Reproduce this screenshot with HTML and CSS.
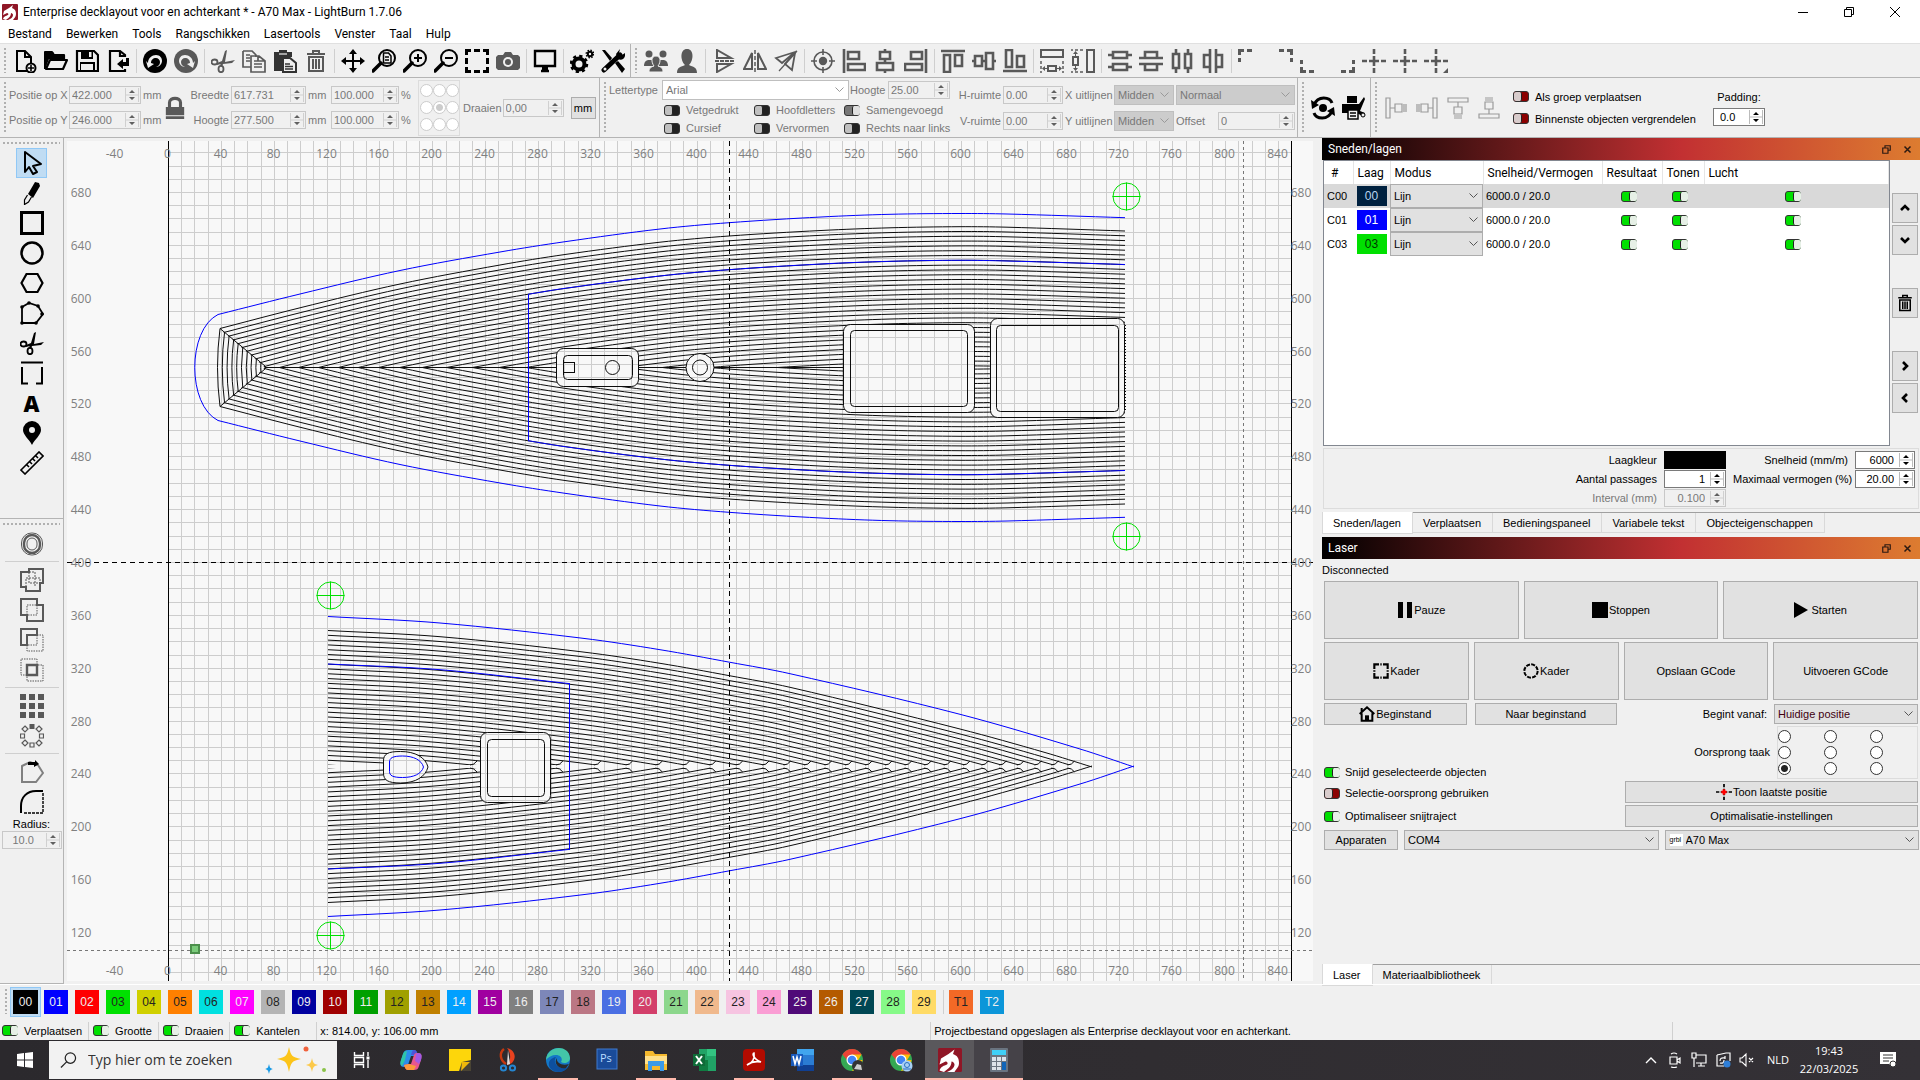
FILE: index.html
```
<!DOCTYPE html>
<html lang="nl">
<head>
    <meta charset="UTF-8">
    <title>LightBurn 1.7.06</title>
    <link rel="stylesheet" href="styles.css">
</head>
<body>
    <!-- icon sprite -->
    <svg class="sprite" aria-hidden="true">
        <symbol id="i-logo" viewBox="0 0 16 16"><rect width="16" height="16" rx="1" fill="#8f1626"/><path d="M1 15c1-3 3-3 5-4 1-1 0-2-1-2L1 11l1-4 5-3 4-3-1 3c3 1 4 3 4 6s-2 4-3 6H6c3-1 5-3 5-5 0-1-1-2-2-2 0 4-3 5-5 7z" fill="#fff"/></symbol>
        <symbol id="i-new" viewBox="0 0 24 24"><path d="M14 22H4V2h8l6 6v6M12 2v6h5" fill="none" stroke="currentColor" stroke-width="2"/><circle cx="18" cy="19" r="4.5" fill="none" stroke="currentColor" stroke-width="2"/><path d="M18 16v6M15 19h6" stroke="currentColor" stroke-width="1.6"/></symbol>
        <symbol id="i-open" viewBox="0 0 24 24"><path d="M1 20V3h7l2 3h10v4M2 20l4-9h17l-4 9z" fill="none" stroke="currentColor" stroke-width="2.2" stroke-linejoin="round"/><path d="M1 3h8l2 4h9v3H5L2 18z"/></symbol>
        <symbol id="i-save" viewBox="0 0 24 24"><path d="M2 2h17l4 4v16H2z" fill="none" stroke="currentColor" stroke-width="2.2"/><path d="M6 1h12v9H6zM5 13h15v9H5z"/><path d="M14 3h2.500v5H14zM6 15h12v6H6z" fill="#f0f0f0"/></symbol>
        <symbol id="i-export" viewBox="0 0 24 24"><path d="M19 8V6l-5-4H4v20h15v-2M14 2v5h5" fill="none" stroke="currentColor" stroke-width="2.200"/><path d="M11 15l6-5v3h3V9h3v8h-6v3z"/></symbol>
        <symbol id="i-undo" viewBox="0 0 24 24"><circle cx="12" cy="12" r="12"/><path d="M5 14c0-5 4-8 8-8s6 3 6 6-3 6-6 6c3-1 4-3 4-5s-2-4-4-4c-3 0-5 2-5 5l3 1-6 4-2-7z" fill="#f0f0f0"/></symbol>
        <symbol id="i-cut" viewBox="0 0 24 24"><g fill="none" stroke="currentColor" stroke-width="1.800"><ellipse cx="3.500" cy="13" rx="3" ry="2.500"/><ellipse cx="10" cy="20" rx="2.500" ry="3.200"/></g><path d="M6 14l5-2 3-10 2-1-2 12 10-2-3 3-9 1-1 3-2-2 1-1-4 1z"/></symbol>
        <symbol id="i-copy" viewBox="0 0 24 24"><path d="M1 2h9l4 4v2M1 2v16h8M9 7h8l6 5v11H9zM4 6h4M4 9h4M4 12h4M12 12h4M12 15h8M12 18h8M16 7v5h6" fill="none" stroke="currentColor" stroke-width="1.700"/></symbol>
        <symbol id="i-paste" viewBox="0 0 24 24"><path d="M1 3h5V1h8v2h5v5H9v14H1z"/><path d="M10 9h7l6 5v9H10z" fill="#f0f0f0" stroke="currentColor" stroke-width="2"/><path d="M12 15h5M12 17.500h8M12 20h8M6 5h8" stroke="currentColor" stroke-width="1.300"/><path d="M6 5h8" stroke="#f0f0f0" stroke-width="1.200"/></symbol>
        <symbol id="i-trash" viewBox="0 0 24 24"><path d="M3 5h18M4 8h16M9 5V2h6v3M5 8v14h14V8M9 10v10M12 10v10M15 10v10" fill="none" stroke="currentColor" stroke-width="2"/></symbol>
        <symbol id="i-move" viewBox="0 0 24 24"><path d="M12 0l4 5h-3v6h6V8l5 4-5 4v-3h-6v6h3l-4 5-4-5h3v-6H5v3l-5-4 5-4v3h6V5H8z"/></symbol>
        <symbol id="i-lens" viewBox="0 0 24 24"><circle cx="15" cy="9" r="8" fill="none" stroke="currentColor" stroke-width="2"/><path d="M9 14l-8 8" stroke="currentColor" stroke-width="3.500" stroke-linecap="round"/></symbol>
        <symbol id="i-zoompage" viewBox="0 0 24 24"><use href="#i-lens"/><path d="M11.500 4h5l2.500 3v7h-7.500zM13 8h4M13 11h4" fill="none" stroke="currentColor" stroke-width="1.500"/></symbol>
        <symbol id="i-zoomin" viewBox="0 0 24 24"><use href="#i-lens"/><path d="M15 5v8M11 9h8" stroke="currentColor" stroke-width="2"/></symbol>
        <symbol id="i-zoomout" viewBox="0 0 24 24"><use href="#i-lens"/><path d="M11 9h8" stroke="currentColor" stroke-width="2"/></symbol>
        <symbol id="i-frame" viewBox="0 0 24 24"><path d="M1.500 6V1.500H6M9 1.500h6M18 1.500h4.500V6M22.500 9v6M22.500 18v4.500H18M15 22.500H9M6 22.500H1.500V18M1.500 15V9" fill="none" stroke="currentColor" stroke-width="3"/></symbol>
        <symbol id="i-camera" viewBox="0 0 24 24"><path d="M2 6h5l2-3h6l2 3h5l2 2v11l-2 2H2l-2-2V8z"/><circle cx="12" cy="13" r="5" fill="#f0f0f0"/><circle cx="12" cy="13" r="3"/></symbol>
        <symbol id="i-monitor" viewBox="0 0 24 24"><path d="M2 2h20v15H2zM8 22h8" fill="none" stroke="currentColor" stroke-width="2.400"/><path d="M9 17h6v5H9z"/></symbol>
        <symbol id="i-gears" viewBox="0 0 24 24"><circle cx="9" cy="15" r="5.500" fill="none" stroke="currentColor" stroke-width="4"/><circle cx="9" cy="15" r="8" fill="none" stroke="currentColor" stroke-width="2.500" stroke-dasharray="3.200 3.080"/><circle cx="20" cy="5" r="2.200" fill="none" stroke="currentColor" stroke-width="2"/><circle cx="20" cy="5" r="3.800" fill="none" stroke="currentColor" stroke-width="1.400" stroke-dasharray="1.500 1.480"/></symbol>
        <symbol id="i-tools" viewBox="0 0 24 24"><path d="M3 21L19 6" stroke="currentColor" stroke-width="5" stroke-linecap="round"/><path d="M15 5l4-5-1 4 3 2 3-2c1 5-3 8-7 6zM1 1l3 0 7 8-2 3zM14 14l3-2 7 8-3 4z"/><circle cx="4" cy="20" r="1.500" fill="#f0f0f0"/></symbol>
        <symbol id="i-group" viewBox="0 0 24 24"><circle cx="5" cy="5" r="3.500"/><circle cx="19" cy="5" r="3.500"/><path d="M0 17c0-4 2-6 5-6h14c3 0 5 2 5 6z"/><path d="M5 23c0-4 2-5 5-6-3-4-3-10 2-10s5 6 2 10c3 1 5 2 5 6z" stroke="#f0f0f0"/></symbol>
        <symbol id="i-person" viewBox="0 0 24 24"><path d="M2 24c0-6 4-6 8-8-5-5-5-16 2-16s7 11 2 16c4 2 8 2 8 8z"/></symbol>
        <symbol id="i-flipv" viewBox="0 0 24 24"><path d="M5 1v8h14zM5 15h14L5 23z" fill="none" stroke="currentColor" stroke-width="2"/><path d="M3 12h20" stroke="currentColor" stroke-width="2" stroke-dasharray="4 1"/></symbol>
        <symbol id="i-fliph" viewBox="0 0 24 24"><path d="M9 4v16H1zM15 4v16h8z" fill="none" stroke="currentColor" stroke-width="2"/><path d="M12 1v22" stroke="currentColor" stroke-width="1.500" stroke-dasharray="4 2"/></symbol>
        <symbol id="i-flipd" viewBox="0 0 24 24"><path d="M2 9l19-6L8 14zM21 4l-3 17-7-6z" fill="none" stroke="currentColor" stroke-width="1.800"/><path d="M5 22L23 2" stroke="currentColor" stroke-width="1.200"/></symbol>
        <symbol id="i-target" viewBox="0 0 24 24"><circle cx="12" cy="12" r="9" fill="none" stroke="currentColor" stroke-width="1.600"/><circle cx="12" cy="12" r="4.200"/><path d="M12 0v6M12 18v6M0 12h6M18 12h6" stroke="currentColor" stroke-width="1.600"/></symbol>
        <symbol id="i-alignl" viewBox="0 0 24 24"><path d="M2 0v24M6 3h11v7H6zM6 15h17v6H6z" fill="none" stroke="currentColor" stroke-width="2.600"/></symbol>
        <symbol id="i-alignc" viewBox="0 0 24 24"><path d="M12 0v3M12 10v4M12 21v3M7 3h10v7H7zM4 14h16v7H4z" fill="none" stroke="currentColor" stroke-width="2.600"/></symbol>
        <symbol id="i-lock" viewBox="0 0 24 24"><path d="M6 12V6c0-6 12-6 12 0v6" fill="none" stroke="currentColor" stroke-width="3.400"/><path d="M2 11h20v9H2zM2 21h20v3H2z"/></symbol>
        <symbol id="i-distw" viewBox="0 0 24 24"><path d="M1 1h22v7H1zM8 17h8v5H8z" fill="none" stroke="currentColor" stroke-width="2"/><path d="M1 12v12M23 12v12" stroke="currentColor" stroke-width="1.500" stroke-dasharray="3 2"/><path d="M7 19.500H3M17 19.500h4" stroke="currentColor"/><path d="M5 17l-3 2.500L5 22zM19 17l3 2.500-3 2.500z"/></symbol>
        <symbol id="i-rotate" viewBox="0 0 24 24"><path d="M3 9c4-10 16-8 18-2M21 15c-4 10-16 8-18 2" fill="none" stroke="currentColor" stroke-width="3"/><path d="M0 4l1 9 7-4zM24 20l-1-9-7 4z"/><circle cx="12" cy="12" r="4"/></symbol>
        <symbol id="i-printcut" viewBox="0 0 24 24"><path d="M5 0h10v7H5zM0 8h17l5-7 1 2-5 12 5 2-1 4-7-4H0z"/><path d="M6 14h10v9H6zM8 17h6M8 20h6" fill="#f0f0f0" stroke="currentColor" stroke-width="1.500"/><circle cx="21" cy="19" r="2" fill="#f0f0f0" stroke="currentColor"/></symbol>
        <symbol id="i-corner" viewBox="0 0 24 24"><path d="M1.500 13V9M1.500 6V1.500H6M9 1.500h5" fill="none" stroke="currentColor" stroke-width="3"/></symbol>
        <symbol id="i-cross" viewBox="0 0 24 24"><path d="M12 0v5M12 7v10M12 19v5M0 12h5M7 12h10M19 12h5" stroke="currentColor" stroke-width="2.600"/></symbol>
        <symbol id="i-distv" viewBox="0 0 24 24"><path d="M5 3h14v6H5zM5 15h14v6H5zM0 6h5M19 6h5M0 18h5M19 18h5" fill="none" stroke="currentColor" stroke-width="2.600"/></symbol>
        <symbol id="i-distc" viewBox="0 0 24 24"><path d="M6 9V3h12v6M6 15v6h12v-6M0 9h24M0 15h24" fill="none" stroke="currentColor" stroke-width="2.600"/></symbol>
        <symbol id="i-dock" viewBox="0 0 24 24"><path d="M2 2h4v20H2zM11 8h7v8h-7zM6 12h5M20 8v8M22 8v8" fill="none" stroke="currentColor" stroke-width="1.200"/></symbol>
        <symbol id="i-select" viewBox="0 0 24 24"><path d="M5 1v20l4-5 4 7 4-2-4-6 8-2z" fill="none" stroke="currentColor" stroke-width="2" stroke-linejoin="round"/></symbol>
        <symbol id="i-pencil" viewBox="0 0 24 24"><path d="M8 13l7-12 4 1 1 3-7 12z"/><path d="M7.500 14l-3 5 0 4.500 4-2.500 3-5" fill="none" stroke="currentColor" stroke-width="1.200"/></symbol>
        <symbol id="i-rect" viewBox="0 0 24 24"><path d="M1.500 1.500h21v21h-21z" fill="none" stroke="currentColor" stroke-width="3"/></symbol>
        <symbol id="i-ellipse" viewBox="0 0 24 24"><circle cx="12" cy="12" r="10.500" fill="none" stroke="currentColor" stroke-width="2.500"/></symbol>
        <symbol id="i-hex" viewBox="0 0 24 24"><path d="M6.500 3h11l5 9-5 9h-11l-5-9z" fill="none" stroke="currentColor" stroke-width="2.200"/></symbol>
        <symbol id="i-poly" viewBox="0 0 24 24"><path d="M2 6l7-4 9 3 5 8-7 9H2z" fill="none" stroke="currentColor" stroke-width="1.800"/><circle cx="2" cy="6" r="1.800"/><circle cx="9" cy="2" r="1.800"/><circle cx="18" cy="5" r="1.800"/><circle cx="22" cy="13" r="1.800"/><circle cx="16" cy="22" r="1.800"/><circle cx="2" cy="22" r="1.800"/></symbol>
        <symbol id="i-bracket" viewBox="0 0 24 24"><path d="M1 1.500h22M8 22.500H2V6M16 22.500h6V6" fill="none" stroke="currentColor" stroke-width="2"/></symbol>
        <symbol id="i-pin" viewBox="0 0 24 24"><path d="M12 24C9 18 3 14 3 9a9 9 0 0 1 18 0c0 5-6 9-9 15z"/><circle cx="12" cy="9" r="3" fill="#f0f0f0"/></symbol>
        <symbol id="i-ruler" viewBox="0 0 24 24"><path d="M1 19L19 1l4 4L5 23zM7 14l2 2M10 11l2 2M13 8l2 2M16 5l2 2" fill="none" stroke="currentColor" stroke-width="1.600"/></symbol>
        <symbol id="i-offset" viewBox="0 0 24 24"><g fill="none" stroke="currentColor"><rect x="1.500" y="1" width="21" height="22" rx="10"/><rect x="4" y="3" width="16" height="18" rx="8" stroke-width="2.400"/><rect x="7" y="6" width="10" height="12" rx="5"/></g></symbol>
        <symbol id="i-weld" viewBox="0 0 24 24"><path d="M9 1h14v14h-3v8H6v-4H1V4h8z" fill="none" stroke="currentColor" stroke-width="2"/><path d="M9 4h6v15M6 19v-9h14v5H9V4" fill="none" stroke="currentColor" stroke-dasharray="2 1"/></symbol>
        <symbol id="i-union" viewBox="0 0 24 24"><path d="M1 1h16v6h6v16H7v-6H1z" fill="none" stroke="currentColor" stroke-width="2"/><path d="M7 7h10v10H7z" fill="none" stroke="currentColor" stroke-dasharray="1.500 1"/></symbol>
        <symbol id="i-subtract" viewBox="0 0 24 24"><path d="M1 1h16v6H7v10H1z" fill="none" stroke="currentColor" stroke-width="2"/><path d="M17 7h6v16H7v-6M17 7v10H7" fill="none" stroke="currentColor" stroke-dasharray="1.500 1"/></symbol>
        <symbol id="i-intersect" viewBox="0 0 24 24"><path d="M7 7h10v10H7z" fill="none" stroke="currentColor" stroke-width="2.400"/><path d="M7 17H1V1h16v6h6v16H7v-6" fill="none" stroke="currentColor" stroke-dasharray="1.500 1"/></symbol>
        <symbol id="i-grid" viewBox="0 0 24 24"><path d="M0 0h6v6H0zM9 0h6v6H9zM18 0h6v6h-6zM0 9h6v6H0zM9 9h6v6H9zM18 9h6v6h-6zM0 18h6v6H0zM9 18h6v6H9zM18 18h6v6h-6z"/></symbol>
        <symbol id="i-radial" viewBox="0 0 24 24"><path d="M9.500 0h5v5h-5z"/><path d="M10 19h4v4h-4zM.5 10h4v4h-4zM19.500 10h4v4h-4zM5 2l3 3-3 3-3-3zM19 2l3 3-3 3-3-3zM5 16l3 3-3 3-3-3zM19 16l3 3-3 3-3-3z" fill="none" stroke="currentColor" stroke-width="1.200"/></symbol>
        <symbol id="i-startpt" viewBox="0 0 24 24"><path d="M2 6l8-4 8 3 5 8-7 9H2z" fill="none" stroke="#808080" stroke-width="2"/><path d="M8 2h7V0l4 4-5 3V5H8z" fill="#000"/></symbol>
        <symbol id="i-fillet" viewBox="0 0 24 24"><path d="M1 23v-7C1 7 7 1 16 1h7" fill="none" stroke="currentColor" stroke-width="2"/><path d="M23 3v20H3" fill="none" stroke="currentColor" stroke-width="1.400" stroke-dasharray="3 1"/></symbol>
        <symbol id="i-up" viewBox="0 0 12 12"><path d="M2 8l4-4 4 4" fill="none" stroke="currentColor" stroke-width="2.600"/></symbol>
        <symbol id="i-circle" viewBox="0 0 24 24"><circle cx="12" cy="12" r="10" fill="none" stroke="currentColor" stroke-width="3" stroke-dasharray="6 1.850"/></symbol>
        <symbol id="i-kader" viewBox="0 0 24 24"><path d="M2 9V2h7M15 2h7v7M22 15v7h-7M9 22H2v-7M11 2h2M11 22h2M2 11v2M22 11v2" fill="none" stroke="currentColor" stroke-width="3.200"/></symbol>
        <symbol id="i-home" viewBox="0 0 24 24"><path d="M1 12L12 2l11 10M4 11v11h16V11M4 9V3" fill="none" stroke="currentColor" stroke-width="3"/><path d="M9 22v-8h6v8z"/></symbol>
        <symbol id="i-float" viewBox="0 0 12 12"><path d="M4 4V1h7v6H8M1 4h7v7H1z" fill="none" stroke="currentColor" stroke-width="1.600"/></symbol>
        <symbol id="i-close" viewBox="0 0 12 12"><path d="M2 2l8 8M10 2l-8 8" stroke="currentColor" stroke-width="2"/></symbol>
        <symbol id="i-chrome" viewBox="0 0 24 24"><circle cx="12" cy="12" r="11" fill="#34a853"/><path d="M12 1v11h10.500A11 11 0 0 1 12 23l5-9 4.500-7.500z" fill="#fbbc04"/><path d="M2.500 6.500A11 11 0 0 1 21.500 6.500H12L7 12z" fill="#ea4335"/><circle cx="12" cy="12" r="5.500" fill="#fff"/><circle cx="12" cy="12" r="4.300" fill="#4285f4"/></symbol>
    </svg>

    <header class="titlebar">
        <svg class="ic16"><use href="#i-logo"/></svg>
        <span class="title">Enterprise decklayout voor en achterkant * - A70 Max - LightBurn 1.7.06</span>
        <div class="winbtns">
            <button aria-label="Minimaliseren"><svg viewBox="0 0 12 12"><path d="M1 6.500h10" stroke="#000"/></svg></button>
            <button aria-label="Herstellen"><svg viewBox="0 0 12 12"><path d="M3.500 3.500v-2h7v7h-2M1.500 3.500h7v7h-7z" fill="none" stroke="#000"/></svg></button>
            <button aria-label="Sluiten"><svg viewBox="0 0 12 12"><path d="M1 1l10 10M11 1L1 11" stroke="#000"/></svg></button>
        </div>
    </header>

    <nav class="menu">
        <a href="#">Bestand</a><a href="#">Bewerken</a><a href="#">Tools</a><a href="#">Rangschikken</a><a href="#">Lasertools</a><a href="#">Venster</a><a href="#">Taal</a><a href="#">Hulp</a>
    </nav>

    <div class="toolrow">
        <div class="toolbar main-tools">
            <span class="handle"></span>
            <button aria-label="Nieuw"><svg><use href="#i-new"/></svg></button>
            <button aria-label="Openen"><svg><use href="#i-open"/></svg></button>
            <button aria-label="Opslaan"><svg><use href="#i-save"/></svg></button>
            <button aria-label="Importeren"><svg><use href="#i-export"/></svg></button>
            <span class="sep"></span>
            <button aria-label="Ongedaan maken"><svg><use href="#i-undo"/></svg></button>
            <button aria-label="Opnieuw" class="dim mirror"><svg><use href="#i-undo"/></svg></button>
            <span class="sep"></span>
            <button aria-label="Knippen" class="dim"><svg><use href="#i-cut"/></svg></button>
            <button aria-label="Kopiëren" class="dim"><svg><use href="#i-copy"/></svg></button>
            <button aria-label="Plakken" class="dark"><svg><use href="#i-paste"/></svg></button>
            <button aria-label="Verwijderen" class="dim"><svg><use href="#i-trash"/></svg></button>
            <span class="sep"></span>
            <button aria-label="Pannen"><svg><use href="#i-move"/></svg></button>
            <button aria-label="Zoom naar pagina"><svg><use href="#i-zoompage"/></svg></button>
            <button aria-label="Inzoomen"><svg><use href="#i-zoomin"/></svg></button>
            <button aria-label="Uitzoomen"><svg><use href="#i-zoomout"/></svg></button>
            <button aria-label="Zoom naar selectie"><svg><use href="#i-frame"/></svg></button>
            <button aria-label="Camera" class="dim"><svg><use href="#i-camera"/></svg></button>
            <span class="sep"></span>
            <button aria-label="Voorbeeld"><svg><use href="#i-monitor"/></svg></button>
            <span class="sep"></span>
            <button aria-label="Instellingen"><svg><use href="#i-gears"/></svg></button>
            <button aria-label="Machine-instellingen"><svg><use href="#i-tools"/></svg></button>
        </div>
        <div class="toolbar dim">
            <span class="handle"></span>
            <button aria-label="Groeperen"><svg><use href="#i-group"/></svg></button>
            <button aria-label="Groep opheffen"><svg><use href="#i-person"/></svg></button>
            <span class="sep"></span>
            <button aria-label="Verticaal spiegelen"><svg><use href="#i-flipv"/></svg></button>
            <button aria-label="Horizontaal spiegelen"><svg><use href="#i-fliph"/></svg></button>
            <button aria-label="Spiegelen over lijn"><svg><use href="#i-flipd"/></svg></button>
            <span class="sep"></span>
            <button aria-label="Centreren"><svg><use href="#i-target"/></svg></button>
            <button aria-label="Links uitlijnen"><svg><use href="#i-alignl"/></svg></button>
            <button aria-label="Midden uitlijnen"><svg><use href="#i-alignc"/></svg></button>
            <button aria-label="Rechts uitlijnen" class="mirror"><svg><use href="#i-alignl"/></svg></button>
            <span class="sep"></span>
            <button aria-label="Boven uitlijnen" class="turn"><svg><use href="#i-alignl"/></svg></button>
            <button aria-label="Verticaal midden" class="turnback"><svg><use href="#i-alignc"/></svg></button>
            <button aria-label="Onder uitlijnen" class="turnflip"><svg><use href="#i-alignl"/></svg></button>
            <span class="sep"></span>
            <button aria-label="Gelijke breedte"><svg><use href="#i-distw"/></svg></button>
            <button aria-label="Gelijke hoogte" class="turn"><svg><use href="#i-distw"/></svg></button>
            <span class="sep"></span>
            <button aria-label="Verdelen verticaal"><svg><use href="#i-distv"/></svg></button>
            <button aria-label="Verdelen midden"><svg><use href="#i-distc"/></svg></button>
            <button aria-label="Verdelen horizontaal" class="turn"><svg><use href="#i-distv"/></svg></button>
            <button aria-label="Verdelen centrum" class="turn"><svg><use href="#i-distc"/></svg></button>
            <span class="sep"></span>
            <button aria-label="Linksboven"><svg><use href="#i-corner"/></svg></button>
            <button aria-label="Rechtsboven" class="mirror"><svg><use href="#i-corner"/></svg></button>
            <button aria-label="Linksonder" class="flip"><svg><use href="#i-corner"/></svg></button>
            <button aria-label="Rechtsonder" class="mirror flip"><svg><use href="#i-corner"/></svg></button>
            <button aria-label="Naar midden"><svg><use href="#i-cross"/></svg></button>
            <button aria-label="Naar laserpositie"><svg><use href="#i-cross"/></svg></button>
            <button aria-label="Naar positie"><svg viewBox="0 0 24 24"><use href="#i-cross"/><path d="M24 19v5h-5z"/></svg></button>
        </div>
    </div>

    <div class="toolrow props">
        <div class="toolbar position off">
            <span class="handle"></span>
            <div class="xy">
                <label for="px">Positie op X</label><input class="spin" id="px" value="422.000" disabled><span>mm</span>
                <label for="py">Positie op Y</label><input class="spin" id="py" value="246.000" disabled><span>mm</span>
            </div>
            <svg class="lock"><use href="#i-lock"/></svg>
            <div class="wh">
                <label for="w">Breedte</label><input class="spin" id="w" value="617.731" disabled><span>mm</span><input class="spin" aria-label="Breedte %" value="100.000" disabled><span>%</span>
                <label for="h">Hoogte</label><input class="spin" id="h" value="277.500" disabled><span>mm</span><input class="spin" aria-label="Hoogte %" value="100.000" disabled><span>%</span>
            </div>
            <div class="anchors">
                <input type="radio" name="anchor" aria-label="Anker 1" disabled><input type="radio" name="anchor" aria-label="Anker 2" disabled><input type="radio" name="anchor" aria-label="Anker 3" disabled>
                <input type="radio" name="anchor" aria-label="Anker 4" disabled><input type="radio" name="anchor" aria-label="Anker 5" disabled checked><input type="radio" name="anchor" aria-label="Anker 6" disabled>
                <input type="radio" name="anchor" aria-label="Anker 7" disabled><input type="radio" name="anchor" aria-label="Anker 8" disabled><input type="radio" name="anchor" aria-label="Anker 9" disabled>
            </div>
            <label for="rot">Draaien</label>
            <input class="spin rot" id="rot" value="0,00" disabled>
            <button class="unit">mm</button>
        </div>
        <div class="toolbar text off">
            <span class="handle"></span>
            <div class="font">
                <div class="fontline">
                    <label for="font">Lettertype</label>
                    <select id="font" disabled><option>Arial</option></select>
                    <label for="fh">Hoogte</label>
                    <input class="spin" id="fh" value="25.00" disabled>
                </div>
                <div class="styles">
                    <label><input type="checkbox" class="switch gray">Vetgedrukt</label>
                    <label><input type="checkbox" class="switch gray">Hoofdletters</label>
                    <label><input type="checkbox" class="switch gray" checked>Samengevoegd</label>
                    <label><input type="checkbox" class="switch gray">Cursief</label>
                    <label><input type="checkbox" class="switch gray">Vervormen</label>
                    <label><input type="checkbox" class="switch gray">Rechts naar links</label>
                </div>
            </div>
            <div class="spacing">
                <label for="hs">H-ruimte</label><input class="spin" id="hs" value="0.00" disabled>
                <label for="xa">X uitlijnen</label><select id="xa" disabled><option>Midden</option></select>
                <select class="wide" aria-label="Tekstmodus" disabled><option>Normaal</option></select>
                <label for="vs">V-ruimte</label><input class="spin" id="vs" value="0.00" disabled>
                <label for="ya">Y uitlijnen</label><select id="ya" disabled><option>Midden</option></select>
                <label for="of" class="left">Offset</label><input class="spin" id="of" value="0" disabled>
            </div>
        </div>
        <div class="toolbar duo">
            <span class="handle"></span>
            <button aria-label="Rotatie"><svg><use href="#i-rotate"/></svg></button>
            <button aria-label="Print en snij"><svg><use href="#i-printcut"/></svg></button>
        </div>
        <div class="toolbar docks">
            <span class="handle"></span>
            <button aria-label="Naar links schuiven" class="pale"><svg><use href="#i-dock"/></svg></button>
            <button aria-label="Naar rechts schuiven" class="pale mirror"><svg><use href="#i-dock"/></svg></button>
            <button aria-label="Omhoog schuiven" class="pale turn"><svg><use href="#i-dock"/></svg></button>
            <button aria-label="Omlaag schuiven" class="pale turnback"><svg><use href="#i-dock"/></svg></button>
            <div class="dockopts">
                <label><input type="checkbox" class="switch">Als groep verplaatsen</label>
                <label><input type="checkbox" class="switch">Binnenste objecten vergrendelen</label>
            </div>
            <div class="padding">
                <label for="pad">Padding:</label>
                <input class="spin" id="pad" value="0.0">
            </div>
        </div>
    </div>

    <main>
        <aside class="tools">
            <div class="toolset draw">
                <span class="hhandle"></span>
                <button class="active" aria-label="Selecteren"><svg><use href="#i-select"/></svg></button>
                <button aria-label="Lijnen tekenen"><svg><use href="#i-pencil"/></svg></button>
                <button aria-label="Rechthoek"><svg><use href="#i-rect"/></svg></button>
                <button aria-label="Ellips"><svg><use href="#i-ellipse"/></svg></button>
                <button aria-label="Veelhoek"><svg><use href="#i-hex"/></svg></button>
                <button aria-label="Knooppunten"><svg><use href="#i-poly"/></svg></button>
                <button aria-label="Vormen knippen"><svg><use href="#i-cut"/></svg></button>
                <button aria-label="Tabs"><svg><use href="#i-bracket"/></svg></button>
                <button class="letter">A</button>
                <button aria-label="Positie"><svg><use href="#i-pin"/></svg></button>
                <button aria-label="Meten"><svg><use href="#i-ruler"/></svg></button>
            </div>
            <div class="toolset modify">
                <span class="hhandle"></span>
                <button class="dim" aria-label="Offset vormen"><svg><use href="#i-offset"/></svg></button>
                <span class="hsep"></span>
                <button class="dim" aria-label="Lassen"><svg><use href="#i-weld"/></svg></button>
                <button class="dim" aria-label="Vereniging"><svg><use href="#i-union"/></svg></button>
                <button class="dim" aria-label="Aftrekken"><svg><use href="#i-subtract"/></svg></button>
                <button class="dim" aria-label="Doorsnede"><svg><use href="#i-intersect"/></svg></button>
                <span class="hsep"></span>
                <button class="dim" aria-label="Rasterreeks"><svg><use href="#i-grid"/></svg></button>
                <button class="dim" aria-label="Cirkelreeks"><svg><use href="#i-radial"/></svg></button>
                <span class="hsep"></span>
                <button aria-label="Startpunt"><svg><use href="#i-startpt"/></svg></button>
                <button aria-label="Hoeken afronden"><svg><use href="#i-fillet"/></svg></button>
                <label for="radius">Radius:</label>
                <input class="spin" id="radius" value="10.0" disabled>
            </div>
        </aside>

        <svg id="canvas" class="canvas" role="img" aria-label="Werkgebied"></svg>

        <aside class="dock">
            <section class="panel cuts">
                <h2>Sneden/lagen <span><svg><use href="#i-float"/></svg><svg><use href="#i-close"/></svg></span></h2>
                <div class="layers">
                    <div class="listbox">
                        <table>
                            <thead>
                                <tr><th class="c-id">#</th><th class="c-laag">Laag</th><th class="c-modus">Modus</th><th class="c-speed">Snelheid/Vermogen</th><th class="c-res">Resultaat</th><th class="c-show">Tonen</th><th>Lucht</th></tr>
                            </thead>
                            <tbody>
                                <tr class="sel"><td>C00</td><td><b class="l00">00</b></td><td><select aria-label="Modus C00"><option>Lijn</option></select></td><td>6000.0 / 20.0</td><td><input type="checkbox" class="switch" aria-label="Resultaat C00" checked></td><td><input type="checkbox" class="switch" aria-label="Tonen C00" checked></td><td><input type="checkbox" class="switch" aria-label="Lucht C00" checked></td></tr>
                                <tr><td>C01</td><td><b class="l01">01</b></td><td><select aria-label="Modus C01"><option>Lijn</option></select></td><td>6000.0 / 20.0</td><td><input type="checkbox" class="switch" aria-label="Resultaat C01" checked></td><td><input type="checkbox" class="switch" aria-label="Tonen C01" checked></td><td><input type="checkbox" class="switch" aria-label="Lucht C01" checked></td></tr>
                                <tr><td>C03</td><td><b class="l03">03</b></td><td><select aria-label="Modus C03"><option>Lijn</option></select></td><td>6000.0 / 20.0</td><td><input type="checkbox" class="switch" aria-label="Resultaat C03" checked></td><td><input type="checkbox" class="switch" aria-label="Tonen C03" checked></td><td><input type="checkbox" class="switch" aria-label="Lucht C03" checked></td></tr>
                            </tbody>
                        </table>
                    </div>
                    <div class="order">
                        <button aria-label="Omhoog"><svg><use href="#i-up"/></svg></button>
                        <button aria-label="Omlaag" class="flip"><svg><use href="#i-up"/></svg></button>
                        <button aria-label="Laag verwijderen" class="del"><svg><use href="#i-trash"/></svg></button>
                        <button aria-label="Volgende" class="turn"><svg><use href="#i-up"/></svg></button>
                        <button aria-label="Vorige" class="turnback"><svg><use href="#i-up"/></svg></button>
                    </div>
                </div>
                <div class="cutprops">
                    <span>Laagkleur</span><span class="color"></span>
                    <label for="speed">Snelheid (mm/m)</label><input class="spin" id="speed" value="6000">
                    <label for="pass">Aantal passages</label><input class="spin" id="pass" value="1">
                    <label for="power">Maximaal vermogen (%)</label><input class="spin" id="power" value="20.00">
                    <label for="int" class="off">Interval (mm)</label><input class="spin" id="int" value="0.100" disabled>
                </div>
                <div class="tabs">
                    <button class="on">Sneden/lagen</button><button>Verplaatsen</button><button>Bedieningspaneel</button><button>Variabele tekst</button><button>Objecteigenschappen</button>
                </div>
            </section>

            <section class="panel laser">
                <h2>Laser <span><svg><use href="#i-float"/></svg><svg><use href="#i-close"/></svg></span></h2>
                <p class="state">Disconnected</p>
                <div class="big three">
                    <button><svg viewBox="0 0 16 16"><path d="M1 0h5v16H1zM10 0h5v16h-5z"/></svg>Pauze</button>
                    <button><svg viewBox="0 0 16 16"><path d="M0 0h16v16H0z"/></svg>Stoppen</button>
                    <button><svg viewBox="0 0 16 16"><path d="M0 0l14 8-14 8z"/></svg>Starten</button>
                </div>
                <div class="big four">
                    <button><svg><use href="#i-kader"/></svg>Kader</button>
                    <button><svg><use href="#i-circle"/></svg>Kader</button>
                    <button>Opslaan GCode</button>
                    <button>Uitvoeren GCode</button>
                </div>
                <div class="jobs">
                    <div class="homes">
                        <button><svg><use href="#i-home"/></svg>Beginstand</button>
                        <button>Naar beginstand</button>
                    </div>
                    <div class="from">
                        <label for="start">Begint vanaf:</label>
                        <select id="start"><option>Huidige positie</option></select>
                    </div>
                    <div class="checks">
                        <label><input type="checkbox" class="switch" checked>Snijd geselecteerde objecten</label>
                        <label><input type="checkbox" class="switch">Selectie-oorsprong gebruiken</label>
                        <label><input type="checkbox" class="switch" checked>Optimaliseer snijtraject</label>
                    </div>
                    <div class="origin">
                        <div class="job">
                            <span>Oorsprong taak</span>
                            <div class="points">
                                <input type="radio" name="job" aria-label="Linksboven"><input type="radio" name="job" aria-label="Boven"><input type="radio" name="job" aria-label="Rechtsboven">
                                <input type="radio" name="job" aria-label="Links"><input type="radio" name="job" aria-label="Midden"><input type="radio" name="job" aria-label="Rechts">
                                <input type="radio" name="job" aria-label="Linksonder" checked><input type="radio" name="job" aria-label="Onder"><input type="radio" name="job" aria-label="Rechtsonder">
                            </div>
                        </div>
                        <button><svg viewBox="0 0 24 24"><use href="#i-cross"/><path d="M8 12h8M12 8v8" stroke="#f00" stroke-width="4"/></svg>Toon laatste positie</button>
                        <button>Optimalisatie-instellingen</button>
                    </div>
                </div>
                <div class="devices">
                    <button>Apparaten</button>
                    <select aria-label="Poort"><option>COM4</option></select>
                    <div class="device">
                        <span class="grbl">grbl</span>
                        <select aria-label="Apparaat"><option>A70 Max</option></select>
                    </div>
                </div>
                <div class="tabs bottom">
                    <button class="on">Laser</button><button>Materiaalbibliotheek</button>
                </div>
            </section>
        </aside>
    </main>

    <div class="palette" id="palette"><span class="handle"></span></div>

    <footer class="status">
        <label><input type="checkbox" class="switch" checked>Verplaatsen</label>
        <label><input type="checkbox" class="switch" checked>Grootte</label>
        <label><input type="checkbox" class="switch" checked>Draaien</label>
        <label class="last"><input type="checkbox" class="switch" checked>Kantelen</label>
        <span class="coords">x: 814.00, y: 106.00 mm</span>
        <span class="message">Projectbestand opgeslagen als Enterprise decklayout voor en achterkant.</span>
        <span class="rest"></span>
    </footer>

    <div class="taskbar">
        <button class="start" aria-label="Start"><svg viewBox="0 0 16 16"><path d="M0 2l7-1v6.500H0zM8 1l8-1v7.500H8zM0 8.500h7V15l-7-1zM8 8.500h8V16l-8-1z" fill="#fff"/></svg></button>
        <div class="search">
            <svg class="glass" viewBox="0 0 18 18"><circle cx="11" cy="7" r="5.500" fill="none" stroke="#222" stroke-width="1.300"/><path d="M7 11l-6 6" stroke="#222" stroke-width="1.300"/></svg>
            <input type="text" placeholder="Typ hier om te zoeken" aria-label="Zoeken">
            <svg class="sparkle" viewBox="0 0 62 28"><path d="M25 1c2 9 3 10 12 12-9 2-10 3-12 13-2-10-3-11-12-13 9-2 10-3 12-12z" fill="#fcc419"/><path d="M48 12c1 5 2 6 6 7-4 1-5 2-6 7-1-5-2-6-6-7 4-1 5-2 6-7z" fill="#fcc94a"/><path d="M5 18c1 4 1 4 4 5-3 1-3 1-4 5-1-4-1-4-4-5 3-1 3-1 4-5z" fill="#1a9be6"/><circle cx="42" cy="3" r="2.500" fill="#f0623c"/><circle cx="60" cy="24" r="2" fill="#8bc34a"/></svg>
        </div>
        <nav class="apps">
            <button aria-label="Taakweergave"><svg class="small" viewBox="0 0 18 18"><path d="M1.500 1v3.500h9V1M1.500 17v-3.500h9V17M1.500 6.500h9v5h-9zM15 1v4M15 9v8" fill="none" stroke="#fff" stroke-width="1.400"/><path d="M13.500 5.500h3v3h-3z" fill="#fff"/></svg></button>
            <button aria-label="Copilot"><svg viewBox="0 0 24 24"><path d="M9 2h6c2 0 3 2 4 5l-4 1h-3l-3 9c-1 2-2 2-4 2-4 0-4-3-3-7l2-6c1-3 2-4 5-4z" fill="#2b8de9"/><path d="M2 12l2-6c1-2 2-3 4-3L6 12l-3 6c-2-1-2-3-1-6z" fill="#2ec5a8"/><path d="M15 2c3 0 3 3 4 5h-7c1-3 1-5 3-5z" fill="#4b54d8"/><path d="M15 22H9c-2 0-3-2-4-5l4-1h3l3-9c1-2 2-2 4-2 4 0 4 3 3 7l-2 6c-1 3-2 4-5 4z" fill="#e8568f"/><path d="M15 22H9c-2 0-3-2-4-5l5-1 7 2z" fill="#fb9a3c"/><path d="M19 5c4 0 4 3 3 7l-2 4-4-3 1-7z" fill="#a05be5"/></svg></button>
            <button aria-label="Notities"><svg viewBox="0 0 24 24"><path d="M1 1h22v11l-10 11H1z" fill="#fdd60b"/><path d="M23 12v11H11l3-9z" fill="#4a4434"/><path d="M14 14h8l-9 9z" fill="#f0b90b"/></svg></button>
            <button aria-label="Knipprogramma"><svg viewBox="0 0 24 24"><path d="M10 0c6 1 11 8 5 15l-4 2c3-6 3-12-1-17z" fill="#e8421f"/><path d="M7 1c-5 4-4 11 2 15" fill="none" stroke="#c5380f" stroke-width="2.400"/><path d="M11 2l2 14-3 1z" fill="#ddd"/><circle cx="6.500" cy="20" r="2.600" fill="none" stroke="#2585d0" stroke-width="2"/><circle cx="15.500" cy="20" r="2.600" fill="none" stroke="#2585d0" stroke-width="2"/></svg></button>
            <button class="run" aria-label="Edge"><svg viewBox="0 0 24 24"><circle cx="12" cy="12" r="12" fill="#1378c8"/><path d="M0 12C1-3 23-4 24 10c0 5-6 6-9 4 2-3 0-7-5-7-4 0-8 2-10 5z" fill="#43c6a8"/><path d="M10 9c-3 4 0 10 6 11 3 0 5 0 7-2-4 7-14 8-19 2-3-5 0-10 6-11z" fill="#0d4f9e"/><path d="M11 10c-1 5 5 8 12 6l-3 4c-7 2-13-5-9-10z" fill="#2b292d"/></svg></button>
            <button aria-label="Photoshop"><svg viewBox="0 0 24 24"><rect x="2" y="1" width="20" height="20" fill="#1a4b99" stroke="#3f7bd0"/><text x="5" y="14" class="ps">Ps</text></svg></button>
            <button class="run" aria-label="Verkenner"><svg viewBox="0 0 24 24"><path d="M1 3h8l2 3h12v16H1z" fill="#f5b92e"/><path d="M1 8h22v8H1z" fill="#ffe08a"/><path d="M4 13h16v10h-4v-5H8v5H4z" fill="#3b9ae8"/></svg></button>
            <button aria-label="Excel"><svg viewBox="0 0 24 24"><path d="M6 1h17v22H6z" fill="#21a366"/><path d="M14 1h9v7h-9z" fill="#33c481"/><path d="M6 12h9v11H6z" fill="#107c41"/><path d="M0 6h12v12H0z" fill="#0f6b38"/><path d="M3 8l6 8M9 8l-6 8" stroke="#fff" stroke-width="2"/></svg></button>
            <button class="run" aria-label="Acrobat"><svg viewBox="0 0 24 24"><rect x="1" y="1" width="22" height="22" rx="4" fill="#b30b00"/><path d="M5 17c5-2 8-6 7-12-2 0-1 6 7 9-5-1-10 0-14 3z" fill="none" stroke="#fff" stroke-width="1.600"/></svg></button>
            <button aria-label="Word"><svg viewBox="0 0 24 24"><path d="M6 1h17v22H6z" fill="#2b7cd3"/><path d="M6 1h17v6H6z" fill="#41a5ee"/><path d="M6 17h17v6H6z" fill="#103f91"/><path d="M0 6h12v12H0z" fill="#185abd"/><path d="M2 8l2 8 2-7 2 7 2-8" fill="none" stroke="#fff" stroke-width="1.500"/></svg></button>
            <button class="run" aria-label="Chrome"><svg viewBox="0 0 24 24"><use href="#i-chrome"/><circle cx="18" cy="18" r="6" fill="#333"/><path d="M14 21l3-5 4 1 1 5z" fill="#ccc"/></svg></button>
            <button aria-label="Chrome 2"><svg viewBox="0 0 24 24"><use href="#i-chrome"/><circle cx="18" cy="18" r="5.500" fill="#a8d0f5"/><circle cx="18" cy="17" r="2.500" fill="none" stroke="#2a6fc0"/><path d="M14 21h8" stroke="#2a6fc0"/></svg></button>
            <button class="run current" aria-label="LightBurn"><svg><use href="#i-logo"/></svg></button>
            <button class="run open" aria-label="Rekenmachine"><svg viewBox="0 0 24 24"><rect x="3" width="18" height="24" rx="1" fill="#6a7480"/><path d="M5 2h14v5H5z" fill="#3fd0f7"/><path d="M5 9h4v4H5zM10 9h4v4h-4zM15 9h4v4h-4zM5 14h4v4H5zM10 14h4v4h-4zM5 19h4v3H5zM10 19h4v3h-4z" fill="#dde3ea"/><path d="M15 14h4v8h-4z" fill="#1065b8"/></svg></button>
        </nav>
        <div class="tray">
            <svg viewBox="0 0 16 16"><path d="M3 11l5-5 5 5" fill="none" stroke="#fff" stroke-width="1.400"/></svg>
            <svg viewBox="0 0 16 16"><path d="M3 5h7v7H3zM10 8l3-2v5l-3-2M4 2q3-2 6 0M4 15q3 1 6 0" fill="none" stroke="#fff" stroke-width="1.200"/></svg>
            <svg viewBox="0 0 16 16"><path d="M5 3h10v8H5M1 1h4v5H1zM3 6v9M7 14h7M10 11v3" fill="none" stroke="#fff" stroke-width="1.200"/></svg>
            <svg viewBox="0 0 16 16"><path d="M2 3l9-2 4 0v8M2 3v11h7M5 9q0-4 5-3M10 4v3M9 8q0 4-4 3" fill="none" stroke="#fff" stroke-width="1.200"/><circle cx="12" cy="12" r="3.500" fill="#2f7fd8"/></svg>
            <svg viewBox="0 0 16 16"><path d="M1 6h2l4-4v12l-4-4H1zM10 6l4 4M14 6l-4 4" fill="none" stroke="#fff" stroke-width="1.100"/></svg>
            <span class="lang">NLD</span>
            <span class="clock">19:43<br>22/03/2025</span>
            <svg class="note" viewBox="0 0 16 16"><path d="M0 0h16v12h-3v3l-4-3H0z" fill="#fff"/><path d="M3 3h10M3 6h10M3 9h6" stroke="#333"/><circle cx="13" cy="12" r="3" fill="#fff" stroke="#333"/></svg>
        </div>
    </div>

    <script src="app.js"></script>
</body>
</html>
```

FILE: styles.css
```
* {
    box-sizing: border-box;
}
body {
    margin: 0;
    height: 100vh;
    display: flex;
    flex-direction: column;
    overflow: hidden;
    background: #f0f0f0;
    color: #000;
    font-family: "Liberation Sans", Arial, sans-serif;
    font-size: 11px;
    line-height: 14px;
    white-space: nowrap;
}
button, input, select {
    font: inherit;
    color: inherit;
    margin: 0;
}
button {
    padding: 0;
    border: none;
    background: none;
    display: flex;
    align-items: center;
    justify-content: center;
}
svg {
    fill: currentColor;
    flex: none;
}
.sprite {
    display: none;
}
.ic16 {
    width: 16px;
    height: 16px;
}
.dim { color: #595959; }
.dark { color: #333; }
.pale { color: #9a9a9a; }
.mirror svg { transform: scaleX(-1); }
.flip svg { transform: scaleY(-1); }
.mirror.flip svg { transform: scale(-1, -1); }
.turn svg { transform: rotate(90deg); }
.turnback svg { transform: rotate(-90deg); }
.turnflip svg { transform: scaleY(-1) rotate(90deg); }

/* title and menu */
.titlebar {
    height: 24px;
    flex: none;
    display: flex;
    align-items: center;
    gap: 5px;
    padding-left: 2px;
    background: #fff;
    font-family: Roboto, sans-serif;
    font-size: 12px;
}
.winbtns {
    margin: 0 2px 0 auto;
    display: flex;
}
.winbtns button {
    width: 46px;
    height: 20px;
}
.winbtns svg {
    width: 12px;
    height: 12px;
}
.menu {
    height: 19px;
    flex: none;
    display: flex;
    align-items: center;
    gap: 14px;
    padding-left: 8px;
    background: #fff;
    font-family: Roboto, sans-serif;
    font-size: 12px;
}
.menu a {
    color: #000;
    text-decoration: none;
}

/* toolbars */
.toolrow {
    height: 35px;
    flex: none;
    display: flex;
    border-top: 1px solid #e0e0e0;
    border-bottom: 1px solid #b4b4b4;
}
.toolbar {
    display: flex;
    align-items: center;
    padding-left: 4px;
}
.main-tools {
    width: 631px;
    border-right: 1px solid #b4b4b4;
}
.handle {
    width: 2px;
    margin-right: 3px;
    align-self: stretch;
    margin-top: 4px;
    margin-bottom: 4px;
    background: repeating-linear-gradient(#b0b0b0 0 2px, transparent 2px 4px);
}
.toolbar button {
    width: 31px;
    height: 28px;
}
.toolbar button svg {
    width: 24px;
    height: 24px;
}
.sep {
    width: 1px;
    height: 24px;
    margin: 0 2px 0 3px;
    background: #cfcfcf;
}
.off {
    color: #787878;
}
.props {
    height: 60px;
    border-top: none;
}
.props > .toolbar {
    border-right: 1px solid #b4b4b4;
}
.props > .docks {
    border-right: none;
}

/* fields */
.spin {
    width: 100%;
    height: 18px;
    padding: 0 16px 0 2px;
    border: 1px solid #7a7a7a;
    border-radius: 0;
    background: #fff url("data:image/svg+xml,%3Csvg xmlns='http://www.w3.org/2000/svg' width='14' height='14'%3E%3Cpath d='M.5 0v14M0 7h14M13.500 0v14' stroke='%23bbb'/%3E%3Cpath d='M4 5l3-3 3 3zM4 9l3 3 3-3z'/%3E%3C/svg%3E") no-repeat right 1px center;
}
.spin:disabled {
    border-color: #c8c8c8;
    background-color: #f0f0f0;
    background-image: url("data:image/svg+xml,%3Csvg xmlns='http://www.w3.org/2000/svg' width='14' height='14'%3E%3Cpath d='M.5 0v14M0 7h14M13.500 0v14' stroke='%23d0d0d0'/%3E%3Cpath d='M4 5l3-3 3 3zM4 9l3 3 3-3z' fill='%23606060'/%3E%3C/svg%3E");
    color: #787878;
}
select {
    appearance: none;
    width: 100%;
    height: 20px;
    padding: 0 16px 0 3px;
    border: 1px solid #adadad;
    border-radius: 0;
    background: #e1e1e1 url("data:image/svg+xml,%3Csvg xmlns='http://www.w3.org/2000/svg' width='9' height='6'%3E%3Cpath d='M.5.5l4 4 4-4' fill='none' stroke='%23555'/%3E%3C/svg%3E") no-repeat right 4px center;
}
select:disabled {
    border-color: #bfbfbf;
    background-color: #ccc;
    background-image: url("data:image/svg+xml,%3Csvg xmlns='http://www.w3.org/2000/svg' width='9' height='6'%3E%3Cpath d='M.5.5l4 4 4-4' fill='none' stroke='%23999'/%3E%3C/svg%3E");
    color: #787878;
    opacity: 1;
}
.switch {
    appearance: none;
    flex: none;
    display: inline-block;
    width: 16px;
    height: 11px;
    border: 1px solid #333;
    border-radius: 3px;
    background: #8b0000;
    vertical-align: middle;
}
.switch::before {
    content: "";
    display: block;
    width: 7px;
    height: 9px;
    border-right: 1px solid #222;
    border-radius: 2px;
    background: #d8cccc;
}
.switch:checked {
    background: #00e000;
}
.switch:checked::before {
    margin-left: 7px;
    border-right: none;
    border-left: 1px solid #222;
    background: #e6f0e6;
}
.switch.gray {
    background: #222;
}
.switch.gray::before {
    background: #c0c0c0;
}
.switch.gray:checked {
    background: #777;
}
.switch.gray:checked::before {
    background: #e0e0e0;
}
label {
    display: inline-block;
}

/* position toolbar */
.position {
    width: 600px;
}
.xy {
    display: grid;
    grid-template-columns: 58px 72px 16px;
    gap: 7px 2px;
    align-items: center;
}
.lock {
    width: 22px;
    height: 24px;
    margin: 0 4px 0 5px;
    color: #595959;
}
.wh {
    display: grid;
    grid-template-columns: 39px 75px 21px 68px 11px;
    gap: 7px 2px;
    align-items: center;
}
.wh label, .xy label {
    text-align: right;
}
.anchors {
    width: 42px;
    height: 56px;
    margin: 0 3px 0 6px;
    border: 1px solid #dcdcdc;
    display: grid;
    grid-template-columns: repeat(3, 13px);
    justify-content: center;
    align-content: space-evenly;
}
input[type="radio"] {
    appearance: none;
    width: 13px;
    height: 13px;
    border: 1px solid #333;
    border-radius: 50%;
    background: #fff;
}
input[type="radio"]:checked {
    background: radial-gradient(circle, #222 0 3px, #fff 4px);
}
input[type="radio"]:disabled {
    border-color: #ccc;
}
input[type="radio"]:disabled:checked {
    background: radial-gradient(circle, #ccc 0 3px, #fff 4px);
}
.position .rot {
    width: 61px;
    margin: 0 7px 0 1px;
}
.toolbar .unit {
    width: 25px;
    height: 22px;
    border: 1px solid #adadad;
    background: #e1e1e1;
    color: #000;
}

/* text toolbar */
.text {
    width: 698px;
}
.font {
    width: 342px;
    align-self: start;
    padding-top: 2px;
}
.fontline {
    display: grid;
    grid-template-columns: 52px 187px 37px 62px;
    gap: 1px;
    align-items: center;
}
.fontline select {
    background-color: #fff;
}
.styles {
    display: grid;
    grid-template-columns: repeat(3, 90px);
    gap: 2px 0;
    padding: 2px 0 0 55px;
}
.styles label, .dockopts label, .status label {
    display: flex;
    align-items: center;
    gap: 6px;
    height: 16px;
}
.spacing {
    display: grid;
    grid-template-columns: 50px 60px 47px 60px 40px 77px;
    gap: 6px 2px;
    align-items: center;
    padding-top: 1px;
}
.spacing label {
    text-align: right;
}
.spacing .left {
    text-align: left;
}
.spacing .wide {
    grid-column: span 2;
}
.duo {
    width: 73px;
}
.docks {
    flex: 1;
}
.dockopts {
    display: grid;
    gap: 6px;
    margin-left: 9px;
    width: 182px;
}
.padding {
    display: grid;
    justify-items: center;
    gap: 4px;
    margin-left: 18px;
    width: 52px;
}
.padding .spin {
    padding-left: 6px;
}

/* work area */
main {
    flex: 1;
    min-height: 0;
    display: grid;
    grid-template-columns: 64px 1fr 598px;
}
.tools {
    border-right: 1px solid #b4b4b4;
    border-bottom: 1px solid #b4b4b4;
}
.toolset {
    display: flex;
    flex-direction: column;
    align-items: center;
}
.hhandle {
    width: 57px;
    height: 2px;
    margin: 4px 0;
    background: repeating-linear-gradient(90deg, #b0b0b0 0 2px, transparent 2px 4px);
}
.draw {
    height: 381px;
    border-bottom: 1px solid #b4b4b4;
}
.toolset button {
    width: 31px;
    height: 30px;
}
.toolset button svg {
    width: 24px;
    height: 24px;
}
.toolset .active {
    background: #c0dcf3;
    border: 1px solid #90c8f6;
}
.toolset .letter {
    font-family: "Open Sans", sans-serif;
    font-size: 22px;
    font-weight: 800;
}
.hsep {
    width: 54px;
    height: 1px;
    margin: 2px 0 3px;
    background: #cfcfcf;
}
.modify .spin {
    width: 60px;
    padding-left: 10px;
}
.canvas {
    width: calc(100% - 12px);
    height: calc(100% - 6px);
    margin: 3px 9px 3px 3px;
    background: #f8f8f8;
    overflow: hidden;
    fill: none;
    font-family: "Open Sans", "Noto Sans", sans-serif;
    font-size: 12px;
}
.canvas .grid { stroke: #cdcdcd; shape-rendering: crispEdges; }
.canvas .edge { stroke: #000; shape-rendering: crispEdges; }
.canvas .labels { fill: #808080; text-anchor: middle; }
.canvas .k { stroke: #0c0c0c; }
.canvas .b { stroke: #00f; }
.canvas .g { stroke: #00e000; }
.canvas .cross { stroke: #000; stroke-dasharray: 5 4; shape-rendering: crispEdges; }
.canvas .cursor { stroke: #777; stroke-dasharray: 3 3; shape-rendering: crispEdges; }
.canvas .laser { fill: #7acb7a; stroke: #4c8f4c; stroke-width: 2; }

/* docked panels */
.dock {
    display: flex;
    flex-direction: column;
    min-width: 0;
}
.panel h2 {
    margin: 0;
    height: 22px;
    display: flex;
    align-items: center;
    padding: 0 8px 0 6px;
    background: linear-gradient(90deg, #000, #c23032 60%, #dd7c30);
    color: #fff;
    font-family: Roboto, sans-serif;
    font-weight: normal;
    font-size: 12px;
}
.panel h2 span {
    margin-left: auto;
    display: flex;
    gap: 12px;
    color: #2c1a12;
}
.panel h2 svg {
    width: 9px;
    height: 9px;
}
.layers {
    display: flex;
    gap: 2px;
    padding: 0 2px 0 1px;
}
.listbox {
    flex: 1;
    height: 286px;
    border: 1px solid #828790;
    background: #fff;
}
table {
    width: 100%;
    border-collapse: collapse;
    table-layout: fixed;
}
th {
    height: 23px;
    padding: 0 4px;
    border-right: 1px solid #e5e5e5;
    font-family: Roboto, sans-serif;
    font-weight: normal;
    font-size: 12px;
    text-align: left;
}
td {
    height: 24px;
    padding: 0 3px;
    text-align: left;
}
td:nth-child(2), td:nth-child(3) { padding: 0; }
td:nth-child(5), td:nth-child(6), td:nth-child(7) {
    padding: 0 6px 2px 0;
    text-align: center;
}
td select {
    display: block;
    height: 24px;
}
.c-id { width: 29px; padding-left: 7px; }
.c-laag { width: 37px; }
.c-modus { width: 93px; }
.c-speed { width: 119px; }
.c-res { width: 60px; }
.c-show { width: 42px; }
.sel { background: #d9d9d9; }
td b {
    display: block;
    width: 30px;
    height: 20px;
    margin: 0 auto;
    font-weight: normal;
    font-size: 12px;
    line-height: 20px;
    text-align: center;
    color: #fff;
}
.l00 { background: #00213f; color: #b9d5ee; }
.l01 { background: #00f; }
.l03 { background: #00e000; color: #003800; }
.order {
    width: 26px;
    display: flex;
    flex-direction: column;
    gap: 2px;
    padding-top: 33px;
}
.order button {
    height: 30px;
    border: 1px solid #adadad;
    background: #e1e1e1;
}
.order svg {
    width: 12px;
    height: 12px;
}
.order .del {
    margin: 31px 0;
}
.order .del svg {
    width: 18px;
    height: 18px;
}
.cutprops {
    margin: 2px 1px 3px;
    height: 61px;
    padding: 2px 3px;
    border: 1px solid #dcdcdc;
    display: grid;
    grid-template-columns: 1fr 62px 115px 60px;
    grid-auto-rows: 18px;
    gap: 1px 7px;
    align-items: center;
    text-align: right;
}
.cutprops .spin {
    text-align: right;
    padding-right: 20px;
}
.color {
    height: 18px;
    background: #000;
}
.tabs {
    display: flex;
    align-items: start;
    height: 22px;
    border-top: 1px solid #a0a0a0;
}
.tabs button {
    height: 20px;
    padding: 0 11px 0 10px;
    border-right: 1px solid #d9d9d9;
    border-bottom: 1px solid #d9d9d9;
}
.tabs .on {
    height: 22px;
    margin-top: -1px;
    background: #fff;
    border-left: 1px solid #d9d9d9;
}
.cuts .tabs {
    margin-bottom: 3px;
}
.laser {
    flex: 1;
    display: flex;
    flex-direction: column;
}
.laser h2 { flex: none; }
.state {
    margin: 4px 0;
}
.big, .homes {
    display: grid;
    gap: 5px;
    margin: 0 2px 3px;
}
.three { grid-template-columns: repeat(3, 1fr); }
.four { grid-template-columns: repeat(4, 1fr); }
.big button {
    height: 58px;
}
.laser .big button, .jobs button, .devices button {
    border: 1px solid #adadad;
    background: #e1e1e1;
    gap: 1px;
}
.laser button svg {
    width: 16px;
    height: 16px;
}
.jobs {
    display: grid;
    grid-template-columns: 1fr 1fr;
    column-gap: 8px;
    padding: 0 2px;
}
.homes {
    grid-template-columns: 1fr 1fr;
    gap: 8px;
    margin: 0;
}
.homes button {
    height: 22px;
}
.from {
    display: grid;
    grid-template-columns: 1fr 144px;
    gap: 7px;
    align-items: center;
    text-align: right;
}
.from select {
    color: #400010;
}
.checks {
    display: flex;
    flex-direction: column;
    gap: 5px;
    padding-top: 39px;
}
.checks label {
    display: flex;
    align-items: center;
    gap: 5px;
    height: 16px;
}
.checks label:last-child {
    margin-top: 2px;
}
.origin {
    display: flex;
    flex-direction: column;
    gap: 2px;
}
.origin button {
    height: 22px;
}
.job {
    display: grid;
    grid-template-columns: 1fr 141px;
    gap: 7px;
    align-items: center;
    text-align: right;
    height: 54px;
}
.points {
    border: 1px solid #dcdcdc;
    display: grid;
    grid-template-columns: repeat(3, 46px);
    gap: 3px 0;
    padding: 3px 0;
}
.devices {
    display: grid;
    grid-template-columns: 74px 1fr 1fr;
    gap: 6px;
    padding: 3px 1px 0 2px;
}
.device {
    position: relative;
}
.device select {
    padding-left: 20px;
}
.grbl {
    position: absolute;
    left: 5px;
    top: 4px;
    width: 13px;
    background: #fff;
    font-size: 7px;
    line-height: 12px;
}
.tabs.bottom {
    margin-top: auto;
    height: 20px;
}

/* colour palette */
.palette {
    height: 36px;
    flex: none;
    display: flex;
    align-items: center;
    padding: 0 0 2px 5px;
    border-top: 1px solid #fff;
}
.palette button {
    width: 24px;
    height: 24px;
    margin: 0 4px 0 3px;
    font-size: 12px;
}
.palette .chosen {
    width: 31px;
    height: 30px;
    margin: 0;
    border: 3px solid #c0dcf3;
    outline: 1px solid #90c8f6;
    outline-offset: -1px;
}

.status {
    height: 20px;
    flex: none;
    display: flex;
    align-items: center;
    padding: 1px 0 0 2px;
}
.status label {
    height: 18px;
    padding-right: 6px;
    margin-right: 4px;
    border-right: 1px solid #d0d0d0;
}
.status .last {
    width: 83px;
    margin-right: 3px;
}
.coords {
    flex: 612;
}
.message {
    flex: 737;
    height: 18px;
    padding: 2px 3px;
    border-left: 1px solid #d0d0d0;
    border-right: 1px solid #d0d0d0;
}
.rest {
    flex: 248;
}

/* windows taskbar */
.taskbar {
    height: 40px;
    flex: none;
    display: flex;
    align-items: center;
    background: linear-gradient(90deg, #2b292d, #302d31 60%, #343136);
    color: #fff;
    font-family: "Open Sans", "Noto Sans", sans-serif;
}
.start {
    width: 49px;
}
.start svg {
    width: 16px;
    height: 16px;
}
.search {
    width: 288px;
    height: 38px;
    display: flex;
    align-items: center;
    padding-left: 11px;
    background: #f2f2f2;
}
.search input {
    flex: 1;
    min-width: 0;
    border: none;
    padding: 0 0 0 11px;
    background: none;
    font-size: 14px;
    line-height: 20px;
}
.search input::placeholder {
    color: #333;
    opacity: 1;
}
.glass {
    width: 17px;
    height: 18px;
}
.sparkle {
    width: 62px;
    height: 28px;
    margin-right: 11px;
}
.apps {
    display: flex;
}
.apps button {
    width: 49px;
    height: 40px;
    border-bottom: 2px solid transparent;
    border-top: 2px solid transparent;
}
.apps svg {
    width: 24px;
    height: 24px;
}
.apps .small {
    width: 18px;
    height: 18px;
}
.apps .run {
    background: linear-gradient(#ffb9ac, #ffb9ac) no-repeat center bottom / 40px 2px border-box;
}
.apps .current {
    background-color: #5a585c;
    background-size: 100% 2px;
}
.apps .open {
    background-color: #454248;
    background-size: 100% 2px;
}
.ps {
    fill: #b9dcff;
    font-size: 11px;
}
.tray {
    margin-left: auto;
    display: flex;
    align-items: center;
    gap: 8px;
    font-size: 11px;
}
.tray svg {
    width: 16px;
    height: 16px;
}
.lang {
    margin-left: 4px;
}
.clock {
    width: 64px;
    text-align: center;
    line-height: 18px;
}
.tray .note {
    margin: 0 24px 0 11px;
}
```

FILE: app.js
```
// Colour palette
const colors = [
    ["00", "#000000"], ["01", "#0000ff"], ["02", "#ff0000"], ["03", "#00e000"], ["04", "#d0d000"],
    ["05", "#ff8000"], ["06", "#00e0e0"], ["07", "#ff00ff"], ["08", "#b4b4b4"], ["09", "#0000a0"],
    ["10", "#a00000"], ["11", "#00a000"], ["12", "#a0a000"], ["13", "#c08000"], ["14", "#00a0ff"],
    ["15", "#a000a0"], ["16", "#808080"], ["17", "#7d87b9"], ["18", "#bb7784"], ["19", "#4a6fe3"],
    ["20", "#d33f6a"], ["21", "#8cd78c"], ["22", "#f0b98d"], ["23", "#f6c4e1"], ["24", "#fa9ed4"],
    ["25", "#500a78"], ["26", "#b45a00"], ["27", "#004754"], ["28", "#86fa88"], ["29", "#ffdb66"],
    ["T1", "#f36926"], ["T2", "#0c96d9"]
];
const darkText = ["03", "04", "05", "06", "08", "12", "13", "17", "18", "21", "22", "23", "24", "28", "29", "T1"];
const palette = document.getElementById("palette");

colors.forEach(([name, color]) => {
    if (name === "T1") {
        const sep = document.createElement("span");
        sep.className = "sep";
        palette.appendChild(sep);
    }
    const b = document.createElement("button");
    b.textContent = name;
    b.style.backgroundColor = color;
    b.style.color = darkText.includes(name) ? "#222" : "#eee";
    if (name === "00") b.className = "chosen";
    palette.appendChild(b);
});

// Work area: one millimetre is 1.3215 px, (0, 400 mm) lies at (168, 562)
const canvas = document.getElementById("canvas");
const S = 1.3215;
const X = mm => Math.round(168 + mm * S) + 0.5;
const Y = mm => Math.round(562 - (mm - 400) * S) + 0.5;
let out = "";

const line = (x1, y1, x2, y2) => `M${x1} ${y1}L${x2} ${y2}`;
const rrect = (x1, y1, x2, y2, r) =>
    `<rect x="${x1}" y="${y1}" width="${x2 - x1}" height="${y2 - y1}" rx="${r}"/>`;

let grid = "";
for (let x = 10; x < 850; x += 10) grid += line(X(x), 0, X(x), 1200);
for (let y = -20; y <= 760; y += 10) grid += line(168, Y(y), 1291, Y(y));
out += `<path class="grid" d="${grid}"/>`;
out += `<path class="edge" d="${line(168.5, 0, 168.5, 1200)}${line(1291.5, 0, 1291.5, 1200)}"/>`;

let labels = "";
for (let x = -40; x <= 840; x += 40) {
    labels += `<text x="${X(x) - 1}" y="158">${x}</text><text x="${X(x) - 1}" y="975">${x}</text>`;
}
for (let y = 120; y <= 680; y += 40) {
    labels += `<text x="81" y="${Y(y) + 4}">${y}</text><text x="1301" y="${Y(y) + 4}">${y}</text>`;
}

// Smooth curve through the measured points of a hull side
function smooth(pts) {
    const res = [];
    const tangent = i => {
        const a = pts[Math.max(0, i - 1)], b = pts[Math.min(pts.length - 1, i + 1)];
        return (b[1] - a[1]) / (b[0] - a[0]);
    };
    for (let i = 0; i < pts.length - 1; i++) {
        const [x0, y0] = pts[i], [x1, y1] = pts[i + 1], w = x1 - x0;
        const m0 = tangent(i) * w, m1 = tangent(i + 1) * w;
        for (let s = 0; s < 8; s++) {
            const t = s / 8, t2 = t * t, t3 = t2 * t;
            res.push([x0 + t * w,
                (2 * t3 - 3 * t2 + 1) * y0 + (t3 - 2 * t2 + t) * m0 + (3 * t2 - 2 * t3) * y1 + (t3 - t2) * m1]);
        }
    }
    res.push(pts[pts.length - 1]);
    return res;
}

// Planks run parallel to the hull side, 4.8 px apart
const STEP = 4.8;
function plank(pts, k) {
    return pts.map((p, i) => {
        const a = pts[Math.max(0, i - 1)], b = pts[Math.min(pts.length - 1, i + 1)];
        return [p[0], p[1] + k * STEP * Math.hypot(1, (b[1] - a[1]) / (b[0] - a[0]))];
    });
}
const poly = pts => "M" + pts.map(p => p[0].toFixed(1) + " " + p[1].toFixed(2)).join("L");
function crossing(pts, y) {
    for (let i = 1; i < pts.length; i++) {
        const a = pts[i - 1], b = pts[i];
        if ((a[1] - y) * (b[1] - y) <= 0 && a[1] !== b[1]) {
            return a[0] + (b[0] - a[0]) * (y - a[1]) / (b[1] - a[1]);
        }
    }
    return null;
}

// Front deck
const edge1 = smooth([[218, 314.5], [300, 294], [400, 270.5], [500, 252], [565, 241.7], [660, 229], [729, 222.7], [821, 217], [890, 214.3], [960, 213.5], [1007, 214], [1125, 217.7]]);
const deck1 = smooth([[220, 328.5], [300, 307.8], [400, 284], [500, 265], [565, 254.5], [660, 242.2], [729, 236], [821, 230.5], [890, 227.8], [960, 226.7], [1007, 227.2], [1125, 231]]);
const inner1 = smooth([[528, 294.3], [565, 288.3], [660, 276], [729, 269.7], [821, 264], [890, 261.3], [960, 260.3], [1007, 261], [1125, 264.5]]);

let planks1 = "";
for (let k = 0; k < 30; k++) planks1 += poly(plank(deck1, k));

const holes1 = rrect(556.5, 348.5, 638.5, 386.5, 7)
    + `<circle cx="700" cy="367.5" r="14"/>`
    + rrect(843.5, 324.5, 974.5, 412.5, 7)
    + rrect(990.5, 318.5, 1124.5, 417.5, 7);
const inside1 = rrect(563.5, 355.5, 632.5, 379.5, 4) + rrect(563.5, 362.5, 574.5, 372.5, 0)
    + `<circle cx="612.5" cy="367.5" r="7"/><circle cx="700" cy="367.5" r="7.5"/>`
    + rrect(850.5, 330.5, 967.5, 406.5, 4) + rrect(996.5, 325.5, 1118.5, 411.5, 4);

let bow = "";
for (let k = 0; k <= 10; k++) {
    const h = 39 - 3.8 * k, x = 220 + 4.55 * k;
    bow += `M${x} ${367.5 - h}Q${x - 5 * h / 39} 367.5 ${x} ${367.5 + h}`;
}

out += `<defs>
    <clipPath id="half1"><path d="M219 200V328.5L265 367.5H1125V200z"/></clipPath>
    <mask id="cut1" maskUnits="userSpaceOnUse" x="160" y="180" width="1000" height="380"><rect x="160" y="180" width="1000" height="380" fill="#fff"/><g fill="#000">${holes1}</g></mask>
</defs>`;
const half1 = `<path class="k" clip-path="url(#half1)" d="${planks1}"/><path class="b" d="${poly(inner1)}"/>`;
out += `<g mask="url(#cut1)">${half1}<g transform="translate(0 735) scale(1 -1)">${half1}</g>
    <path class="k" d="M220 328.5L265 366L265 369L220 406.5M265 367.5H850"/><path class="k" d="${bow}"/></g>`;
out += `<path class="b" d="M528.5 294.3V440.7"/>`;
out += `<path class="b" d="${poly(edge1)}"/><path class="b" transform="translate(0 735) scale(1 -1)" d="${poly(edge1)}"/>`;
out += `<path class="b" d="M218 314.5C187 330 187 405 218 420.5"/>`;
out += `<g class="k">${holes1}${inside1}</g><path class="k" stroke-dasharray="1 2" d="M1125.5 325V412"/>`;

// Rear deck
const C2 = 767;
const edge2 = smooth([[328, 616.5], [440, 623], [583, 638.3], [660, 649.7], [730, 662.3], [790, 673.7], [960, 714.3], [1080, 749], [1134, C2]]);
const deck2 = smooth([[328, 630.5], [440, 636.7], [583, 652], [660, 663.3], [730, 675.8], [790, 687.3], [960, 729], [1045, 752.5], [1092, C2]]);
const inner2 = smooth([[328, 664], [440, 669.7], [570, 683.7]]);

let planks2 = "", hooks = "";
for (let k = 1; k < 29; k++) {
    const p = plank(deck2, k);
    planks2 += poly(p);
    const x = crossing(p, C2 - 2);
    if (x) hooks += `M${(x - 2).toFixed(1)} ${C2 - 2}q4 0 7 -4`;
}
const holes2 = `<path d="M383.5 766v-5c0-7 4-9.500 17-9.500 15 0 25 6 27.500 15.500-2.500 9.500-12 16-27.500 16-13 0-17-3-17-10z"/>`
    + rrect(480.5, 732.5, 550.5, 802.5, 7);
out += `<defs>
    <clipPath id="half2"><path d="M328 600V${C2 - 2}H1093V600z"/></clipPath>
    <mask id="cut2" maskUnits="userSpaceOnUse" x="300" y="600" width="860" height="340"><rect x="300" y="600" width="860" height="340" fill="#fff"/><g fill="#000">${holes2}</g></mask>
</defs>`;
const half2 = `<path class="k" clip-path="url(#half2)" d="${planks2}"/><path class="k" d="${poly(deck2)}${hooks}"/><path class="b" d="${poly(inner2)}"/>`;
const flip2 = `transform="translate(0 ${C2 * 2 - 1}) scale(1 -1)"`;
out += `<g mask="url(#cut2)">${half2}<g ${flip2}>${half2}</g></g>`;
out += `<path class="b" d="${poly(edge2)}"/><path class="b" ${flip2} d="${poly(edge2)}"/><path class="b" d="M569.5 683.7V849.5"/>`;
out += `<g class="k">${holes2}${rrect(487.5, 739.5, 544.5, 796.5, 4)}</g>`;
out += `<path class="b" d="M389.5 766v-4c0-4 3-6 13-6 11 0 19 4 21 11-2 7-10 10.500-21 10.500-10 0-13-2-13-6z"/>`;

// Registration marks
[[1126.5, 196.5], [1126.5, 536.5], [330.5, 595.5], [330.5, 935.5]].forEach(([x, y]) => {
    out += `<g class="g"><circle cx="${x}" cy="${y}" r="13.5"/><path d="M${x - 14} ${y}h28M${x} ${y - 14}v28"/></g>`;
});

out += `<path class="cross" d="M729.5 141V1200M67 562.5H1600"/>`;
out += `<path class="cursor" d="M1243.5 141V1200M67 950.5H1600"/>`;
out += `<rect class="laser" x="191" y="945" width="8" height="8"/>`;
out += `<g class="labels">${labels}</g>`;

canvas.innerHTML = `<g transform="translate(-67 -141)">${out}</g>`;
```
